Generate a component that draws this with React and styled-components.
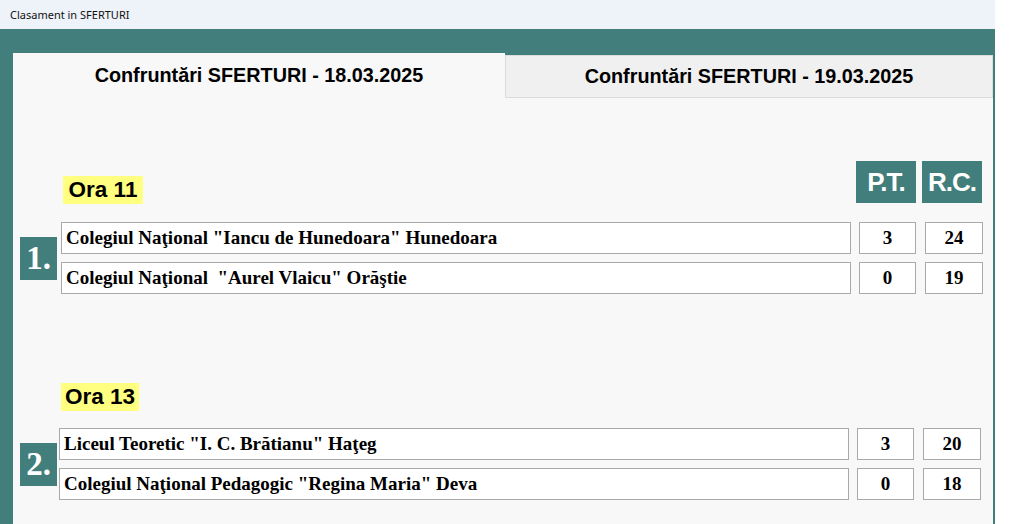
import styled, { createGlobalStyle } from "styled-components"

const GlobalStyle = createGlobalStyle`
  html, body { margin: 0; padding: 0; background: #ffffff; overflow: hidden; }
  * { box-sizing: border-box; }
`

const TEAL = "#417e7c"

const Window = styled.div`
  width: 995px;
  height: 524px;
  display: flex;
  flex-direction: column;
`

const TitleBar = styled.div`
  height: 29px;
  flex-shrink: 0;
  background: #eef2f9;
  display: flex;
  align-items: center;
  padding-left: 10px;
  font-family: "Noto Sans", "Open Sans", sans-serif;
  font-size: 11px;
  color: #111;
`

const Frame = styled.div`
  flex: 1;
  background: ${TEAL};
  padding: 24px 2px 0 13px;
  display: flex;
  flex-direction: column;
  min-height: 0;
`

const Tabs = styled.div`
  display: flex;
  align-items: flex-end;
  height: 45px;
  flex-shrink: 0;
`

const Tab = styled.div`
  height: ${p => (p.$active ? "45px" : "43px")};
  flex: ${p => (p.$active ? "0 0 492px" : "1")};
  background: ${p => (p.$active ? "#f8f8f8" : "#f0f0f0")};
  border: ${p => (p.$active ? "none" : "1px solid #dcdcdc")};
  display: flex;
  align-items: center;
  justify-content: center;
  font-family: "Liberation Sans", Arial, sans-serif;
  font-weight: bold;
  font-size: 19.8px;
  color: #000;
`

const Content = styled.div`
  flex: 1;
  background: #f8f8f8;
  padding: 62px 11px 0 7px;
  display: flex;
  flex-direction: column;
`

const HeaderRow = styled.div`
  display: flex;
  align-items: flex-end;
  height: 43px;
`

const HourLabel = styled.div`
  align-self: flex-start;
  margin-left: ${p => p.$indent}px;
  width: ${p => p.$w}px;
  height: 28px;
  background: #ffff80;
  display: flex;
  align-items: center;
  justify-content: center;
  white-space: nowrap;
  font-family: "Liberation Sans", Arial, sans-serif;
  font-weight: bold;
  font-size: 22.5px;
  color: #000;
`

const Columns = styled.div`
  margin-left: auto;
  display: flex;
  gap: 6px;
`

const ColHead = styled.div`
  width: 60px;
  height: 42px;
  background: ${TEAL};
  color: #fff;
  display: flex;
  align-items: center;
  justify-content: center;
  font-family: "Liberation Sans", Arial, sans-serif;
  font-weight: bold;
  font-size: 26px;
  letter-spacing: -1px;
`

const Match = styled.div`
  display: flex;
  align-items: center;
  margin-top: ${p => p.$top}px;
`

const NumBox = styled.div`
  flex-shrink: 0;
  width: 37px;
  height: 43px;
  background: ${TEAL};
  color: #fff;
  display: flex;
  align-items: center;
  justify-content: center;
  font-family: "Liberation Serif", "Times New Roman", serif;
  font-weight: bold;
  font-size: 33px;
  margin-right: ${p => p.$gap}px;
`

const Rows = styled.div`
  display: flex;
  flex-direction: column;
  gap: 8px;
`

const Row = styled.div`
  display: flex;
  gap: 8px;
`

const Cell = styled.div`
  flex-shrink: 0;
  width: ${p => p.$w}px;
  height: 32px;
  background: #fff;
  border: 1px solid #a9a9a9;
  display: flex;
  align-items: center;
  justify-content: ${p => (p.$center ? "center" : "flex-start")};
  padding-left: ${p => (p.$center ? 0 : 4)}px;
  font-family: "Liberation Serif", "Times New Roman", serif;
  font-weight: bold;
  font-size: 19px;
  color: #000;
  white-space: pre;
`

const Spacer = styled.div`
  height: ${p => p.$h}px;
`

const sections = [
  {
    hour: "Ora 11",
    num: "1.",
    teams: [
      { name: "Colegiul Naţional \"Iancu de Hunedoara\" Hunedoara", pt: 3, rc: 24 },
      { name: "Colegiul Naţional  \"Aurel Vlaicu\" Orăştie", pt: 0, rc: 19 },
    ],
  },
  {
    hour: "Ora 13",
    num: "2.",
    teams: [
      { name: "Liceul Teoretic \"I. C. Brătianu\" Haţeg", pt: 3, rc: 20 },
      { name: "Colegiul Naţional Pedagogic \"Regina Maria\" Deva", pt: 0, rc: 18 },
    ],
  },
]

function Team({ name, pt, rc }) {
  return (
    <Row>
      <Cell $w={790}>{name}</Cell>
      <Cell $w={57} $center>{pt}</Cell>
      <Cell $w={58} $center style={{ marginLeft: 1 }}>{rc}</Cell>
    </Row>
  )
}

export default function App() {
  const [first, second] = sections
  return (
    <>
      <GlobalStyle />
      <Window>
        <TitleBar>Clasament in SFERTURI</TitleBar>
        <Frame>
          <Tabs>
            <Tab $active>Confruntări SFERTURI - 18.03.2025</Tab>
            <Tab>Confruntări SFERTURI - 19.03.2025</Tab>
          </Tabs>
          <Content>
            <HeaderRow>
              <HourLabel $indent={43} $w={80} style={{ alignSelf: "flex-end", marginBottom: -1 }}>{first.hour}</HourLabel>
              <Columns>
                <ColHead>P.T.</ColHead>
                <ColHead>R.C.</ColHead>
              </Columns>
            </HeaderRow>
            <Match $top={19}>
              <NumBox $gap={4}>{first.num}</NumBox>
              <Rows>
                {first.teams.map(t => <Team key={t.name} {...t} />)}
              </Rows>
            </Match>
            <Spacer $h={89} />
            <HourLabel $indent={41} $w={78}>{second.hour}</HourLabel>
            <Match $top={17}>
              <NumBox $gap={2}>{second.num}</NumBox>
              <Rows>
                {second.teams.map(t => <Team key={t.name} {...t} />)}
              </Rows>
            </Match>
          </Content>
        </Frame>
      </Window>
    </>
  )
}
